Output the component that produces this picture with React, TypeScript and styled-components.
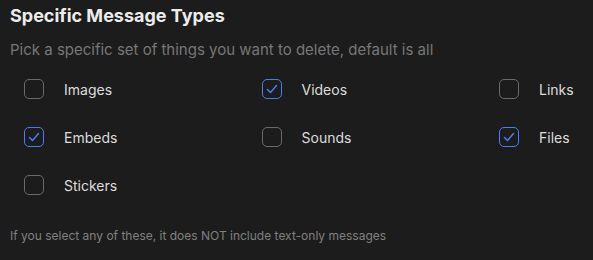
import styled, { createGlobalStyle } from "styled-components";

const GlobalStyle = createGlobalStyle`
  body {
    margin: 0;
    background: #1c1c1c;
    font-family: Inter, "Noto Sans", sans-serif;
  }
`;

const Section = styled.section`
  padding: 4px 10px 0;
  width: 593px;
  height: 260px;
  box-sizing: border-box;
  overflow: hidden;
`;

const Title = styled.h2`
  margin: 0;
  font-size: 18px;
  line-height: 24px;
  font-weight: 700;
  color: #ececec;
`;

const Subtitle = styled.p`
  margin: 12px 0 0;
  font-size: 15px;
  line-height: 20px;
  color: #777;
`;

const Grid = styled.div`
  display: grid;
  grid-template-columns: repeat(3, 237.5px);
  grid-auto-rows: 48px;
  margin: 5px 0 0 14px;
`;

const Option = styled.label`
  display: flex;
  align-items: center;
  gap: 20px;
  font-size: 14px;
  color: #dcdcdc;
  cursor: pointer;
  white-space: nowrap;
`;

const Box = styled.span<{ $checked: boolean }>`
  width: 20px;
  height: 20px;
  box-sizing: border-box;
  border-radius: 5px;
  border: 1.5px solid ${(p) => (p.$checked ? "#4b7cf2" : "#6a6a6a")};
  display: flex;
  align-items: center;
  justify-content: center;
  flex-shrink: 0;
`;

const Note = styled.p`
  margin: 19px 0 0;
  font-size: 12px;
  line-height: 16px;
  color: #808080;
`;

const options = [
  { name: "Images", checked: false },
  { name: "Videos", checked: true },
  { name: "Links", checked: false },
  { name: "Embeds", checked: true },
  { name: "Sounds", checked: false },
  { name: "Files", checked: true },
  { name: "Stickers", checked: false },
];

function Check() {
  return (
    <svg width="12" height="12" viewBox="0 0 12 12" fill="none">
      <path d="M1.5 6.5 L4.5 9.5 L10.5 2.5" stroke="#4b7cf2" strokeWidth="1.5" strokeLinecap="round" strokeLinejoin="round" />
    </svg>
  );
}

export default function App() {
  return (
    <>
      <GlobalStyle />
      <Section>
        <Title>Specific Message Types</Title>
        <Subtitle>Pick a specific set of things you want to delete, default is all</Subtitle>
        <Grid>
          {options.map((o) => (
            <Option key={o.name}>
              <Box $checked={o.checked}>{o.checked && <Check />}</Box>
              {o.name}
            </Option>
          ))}
        </Grid>
        <Note>If you select any of these, it does NOT include text-only messages</Note>
      </Section>
    </>
  );
}
